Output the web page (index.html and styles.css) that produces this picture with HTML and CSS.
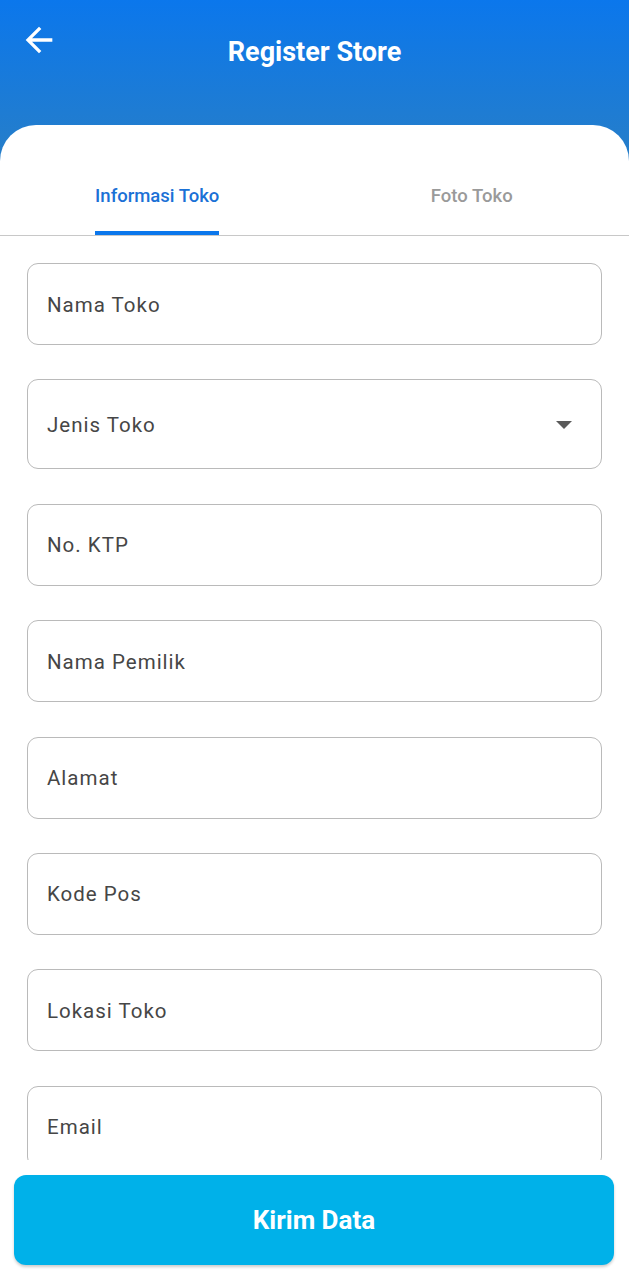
FILE: index.html
```html
<!DOCTYPE html>
<html lang="id">
<head>
<meta charset="utf-8">
<title>Register Store</title>
<link rel="stylesheet" href="styles.css">
</head>
<body>
<div class="app">
  <header class="header">
    <button class="back" aria-label="Kembali">
      <svg viewBox="0 0 24 24" width="40" height="40"><path fill="#fff" d="M20 11H7.83l5.59-5.59L12 4l-8 8 8 8 1.41-1.41L7.83 13H20v-2z"/></svg>
    </button>
    <h1 class="title">Register Store</h1>
  </header>
  <main class="card">
    <nav class="tabs">
      <div class="tab active"><span class="tab-label">Informasi Toko</span></div>
      <div class="tab"><span class="tab-label">Foto Toko</span></div>
    </nav>
    <div class="form">
      <div class="field">Nama Toko</div>
      <div class="field select">Jenis Toko<span class="caret"></span></div>
      <div class="field">No. KTP</div>
      <div class="field">Nama Pemilik</div>
      <div class="field">Alamat</div>
      <div class="field">Kode Pos</div>
      <div class="field">Lokasi Toko</div>
      <div class="field">Email</div>
    </div>
    <div class="footer">
      <button class="submit">Kirim Data</button>
    </div>
  </main>
</div>
</body>
</html>
```

FILE: styles.css
```css
* { box-sizing: border-box; }
html, body { margin: 0; padding: 0; }
body {
  font-family: Roboto, "Liberation Sans", sans-serif;
  width: 629px;
  height: 1280px;
  overflow: hidden;
}
.app {
  height: 1280px;
  display: flex;
  flex-direction: column;
  background: linear-gradient(180deg, #0b77ec 0%, #2a7fc4 100%) no-repeat;
  background-size: 100% 180px;
  background-color: #fff;
}
.header {
  height: 125px;
  flex: none;
  position: relative;
  display: flex;
  justify-content: center;
  padding-top: 36px;
}
.back {
  position: absolute;
  left: 19px;
  top: 20px;
  width: 40px;
  height: 40px;
  padding: 0;
  border: 0;
  background: none;
  display: flex;
}
.title {
  margin: 0;
  color: #fff;
  font-size: 27px;
  font-weight: 700;
  line-height: 32px;
}
.card {
  flex: 1;
  background: #fff;
  border-radius: 36px 36px 0 0;
  display: flex;
  flex-direction: column;
  overflow: hidden;
  min-height: 0;
}
.tabs {
  height: 111px;
  flex: none;
  display: flex;
  border-bottom: 1px solid #c8c8c8;
}
.tab {
  flex: 1;
  display: flex;
  justify-content: center;
  align-items: flex-end;
}
.tab-label {
  font-size: 18.5px;
  font-weight: 500;
  color: #9a9a9a;
  line-height: 20px;
  padding-bottom: 25px;
  border-bottom: 4px solid transparent;
}
.tab.active .tab-label {
  color: #1b71d6;
  border-bottom-color: #0b77ec;
  border-radius: 3px 3px 0 0;
}
.form {
  flex: 1;
  min-height: 0;
  overflow: hidden;
  padding: 27px 27px 0;
  display: flex;
  flex-direction: column;
  gap: 34.4px;
}
.field {
  flex: none;
  height: 82px;
  border: 1.5px solid #bababa;
  border-radius: 11px;
  display: flex;
  align-items: center;
  padding-left: 19px;
  padding-top: 1px;
  font-size: 20.5px;
  letter-spacing: 1px;
  color: #464646;
}
.field.select {
  height: 90px;
  justify-content: space-between;
  padding-right: 29px;
}
.caret {
  width: 0;
  height: 0;
  border-left: 8px solid transparent;
  border-right: 8px solid transparent;
  border-top: 8px solid #5a5a5a;
}
.footer {
  flex: none;
  padding: 15px 15px 15px 14px;
}
.submit {
  width: 100%;
  height: 90px;
  border: 0;
  border-radius: 12px;
  background: #00b1e9;
  color: #fff;
  font-family: Roboto, "Liberation Sans", sans-serif;
  font-size: 26px;
  font-weight: 700;
  box-shadow: 0 2px 3px rgba(0, 0, 0, 0.2);
}
```
